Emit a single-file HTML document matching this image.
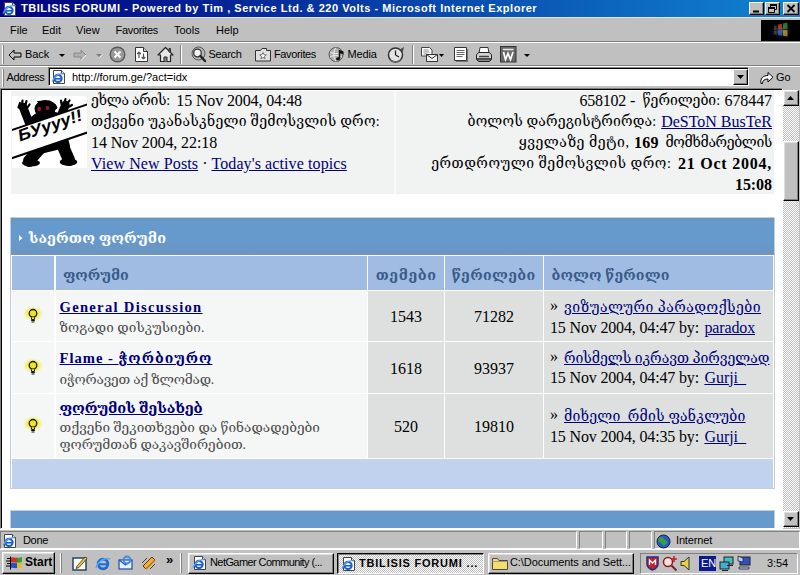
<!DOCTYPE html>
<html><head><meta charset="utf-8"><title>TBILISIS FORUMI</title>
<style>
*{box-sizing:border-box;margin:0;padding:0}
html,body{width:800px;height:575px;overflow:hidden;background:#c0c0c0}
body{position:relative;font-family:"Liberation Sans","DejaVu Sans",sans-serif;font-size:11px;color:#000}
.abs,.abs>*{position:absolute}
svg{display:block;overflow:visible}
#title{left:0;top:0;width:800px;height:17px;background:linear-gradient(90deg,#000080 0%,#1084d0 100%)}
#title .t{left:20px;top:2px;color:#fff;font-weight:bold;font-size:11px;white-space:nowrap}
.wb{top:2px;width:15px;height:13px;background:#c0c0c0;border:1px solid;border-color:#fff #000 #000 #fff;box-shadow:inset -1px -1px 0 #808080}
#menu{left:0;top:17px;width:800px;height:24px;background:#c0c0c0;border-top:1px solid #e4e4ec}
#menu span{top:5.5px;font-size:11px;white-space:nowrap}
#tb{left:0;top:41px;width:800px;height:24px;background:#c0c0c0;border-top:1px solid #808080;box-shadow:inset 0 1px 0 #fff}
#tb span.l{top:6px;font-size:11px;white-space:nowrap}
.grip{left:2px;width:2px;border-left:1px solid #fff;border-right:1px solid #808080}
.sep{width:2px;border-left:1px solid #808080;border-right:1px solid #fff}
#addr{left:0;top:65px;width:800px;height:23px;background:#c0c0c0;border-top:1px solid #808080;box-shadow:inset 0 1px 0 #fff}
#page{left:0;top:88px;width:783px;height:441px;background:#fff;border:1px solid;border-color:#808080 #fff #fff #808080;overflow:hidden}
#pin{left:0;top:0;width:781px;height:439px;border-left:1px solid #000;border-top:1px solid #000;overflow:hidden}
.pg{font-family:"Liberation Serif","DejaVu Serif",serif;font-size:16px;color:#000}
.k{font-family:"Liberation Serif","DejaVu Serif",serif;font-size:14px}
a{color:#00007a;text-decoration:underline}
.ln{position:absolute;white-space:nowrap;line-height:21px;height:21px;letter-spacing:.05px}
.r{right:28px;text-align:right}
.p{position:absolute;white-space:nowrap;line-height:21px;height:21px}
.hd{color:#fff;font-weight:bold;font-size:14.4px !important;line-height:20px}
.ch{top:256px;height:34px;background:#a0bce2}
.ct{color:#3a5a8a;font-weight:bold;font-size:14.2px !important;line-height:22px}
.c1{background:#f5f6f6}
.c2{background:#dee0e0;text-align:center;white-space:nowrap;padding-top:1px}
.ft{font-weight:bold;font-size:14.6px}
.ds{color:#4c4c4c;font-size:13.6px !important;line-height:18px}
.btn{background:#c0c0c0;border:1px solid;border-color:#fff #000 #000 #fff;box-shadow:inset -1px -1px 0 #808080,inset 1px 1px 0 #dfdfdf}
.btnp{background:conic-gradient(#fff 25%,#c0c0c0 0 50%,#fff 0 75%,#c0c0c0 0) 0 0/2px 2px;border:1px solid;border-color:#000 #fff #fff #000;box-shadow:inset 1px 1px 0 #808080}
.sunk{border:1px solid;border-color:#808080 #fff #fff #808080}
#t_title{letter-spacing:0.53px}
#i_l1a{letter-spacing:-0.28px}
#i_l1b{letter-spacing:-0.13px}
#i_l2{letter-spacing:0.26px}
#i_l3{letter-spacing:-0.11px}
#i_l4{letter-spacing:0.10px}
#i_r1a{letter-spacing:-0.23px}
#i_r1b{letter-spacing:-0.04px}
#i_r1c{letter-spacing:-0.08px}
#i_r2a{letter-spacing:0.15px}
#i_r2b{letter-spacing:-0.02px}
#i_r3a{letter-spacing:0.52px}
#i_r3b{letter-spacing:0.23px}
#i_r3c{letter-spacing:-0.37px}
#i_r4a{letter-spacing:0.51px}
#i_r4b{letter-spacing:0.76px}
#i_r5{letter-spacing:-0.07px}
#h_cat{letter-spacing:0.14px}
#h_c1{letter-spacing:0.00px}
#h_c2{letter-spacing:0.64px}
#h_c3{letter-spacing:0.35px}
#h_c4{letter-spacing:0.14px}
#r1_t{letter-spacing:1.30px}
#r1_d{letter-spacing:0.07px}
#r2_t{letter-spacing:1.00px}
#r2_d{letter-spacing:-0.20px}
#r3_t{letter-spacing:-0.17px}
#r3_d1{letter-spacing:0.02px}
#r3_d2{letter-spacing:-0.04px}
#r1_l{letter-spacing:0.46px}
#r1_b{letter-spacing:-0.16px}
#r1_u{letter-spacing:-0.13px}
#r2_l{letter-spacing:-0.02px}
#r2_b{letter-spacing:-0.16px}
#r2_u{letter-spacing:-0.03px}
#a_lbl{letter-spacing:-0.34px}
#m_fav{letter-spacing:-0.31px}
#s_done{letter-spacing:-0.32px}
#s_inet{letter-spacing:-0.16px}
#tb1{letter-spacing:-0.04px}
#tb2{letter-spacing:-0.31px}
#tb3{letter-spacing:-0.36px}
#tb4{letter-spacing:-0.15px}
#tk1{letter-spacing:-0.58px}
#tk2{letter-spacing:0.80px}
#tk3{letter-spacing:-0.08px}
#clock{letter-spacing:-0.11px}
#r3_l{letter-spacing:0.22px}
#r3_b{letter-spacing:-0.16px}
#r3_u{letter-spacing:-0.03px}

</style></head><body>
<!-- TITLE BAR -->
<div id="title" class="abs"><span class="t" id="t_title" style="left:21px">TBILISIS FORUMI - Powered by Tim , Service Ltd. &amp; 220 Volts - Microsoft Internet Explorer</span>
<div class="wb" style="left:749px"></div><div class="wb" style="left:765px"></div><div class="wb" style="left:783px;width:16px"></div><svg style="left:2px;top:1px" width="16" height="16" viewBox="0 0 16 16"><path d="M2.5 1.5h8l3 3v10h-11z" fill="#fff" stroke="#444" stroke-width="1"/><path d="M10.5 1.5v3h3" fill="#ddd" stroke="#444" stroke-width="1"/><circle cx="7" cy="9.5" r="3.6" fill="none" stroke="#1c5fd0" stroke-width="2.2"/><path d="M3.5 9.8h7" stroke="#1c5fd0" stroke-width="1.6"/><path d="M1 12.5C3 7 9 3.5 13 5" fill="none" stroke="#5aa0f0" stroke-width="1.2"/></svg>
<svg style="left:749px;top:2px" width="15" height="13"><path d="M4 9.5h6" stroke="#000" stroke-width="2"/></svg>
<svg style="left:765px;top:2px" width="15" height="13"><path d="M5.5 2.5h6v5h-6zM5.5 3.5h6" fill="none" stroke="#000" stroke-width="1"/><path d="M5 2h7v2h-7z" fill="#000"/><path d="M3.500 5.500h6v5h-6z" fill="#c0c0c0" stroke="#000" stroke-width="1"/><path d="M3 5h7v2h-7z" fill="#000"/></svg>
<svg style="left:783px;top:2px" width="16" height="13"><path d="M4.500 3L11.500 10M11.500 3L4.500 10" stroke="#000" stroke-width="1.8"/></svg>
</div>
<!-- MENU -->
<div id="menu" class="abs"><span style="left:10px">File</span><span style="left:42px">Edit</span><span style="left:76px">View</span><span style="left:115.5px" id="m_fav">Favorites</span><span style="left:174px">Tools</span><span style="left:216px">Help</span>
<svg style="left:761px;top:2px" width="39" height="21" viewBox="0 0 39 21"><rect width="39" height="21" fill="#000"/><defs><radialGradient id="lg"><stop offset="0" stop-color="#4a6a9a" stop-opacity=".9"/><stop offset="1" stop-color="#000" stop-opacity="0"/></radialGradient></defs><ellipse cx="20" cy="11" rx="13" ry="9" fill="url(#lg)"/><g opacity=".7"><path d="M17 4.500l4-.8v5.500l-4 .3z" fill="#d04a2a"/><path d="M22 3.500l4.500-.9v6.200l-4.500 .3z" fill="#4a9a3a"/><path d="M17 10.500l4-.2v5.500l-4-.8z" fill="#3a6ac8"/><path d="M22 10.200l4.500-.2v6.500l-4.500-.8z" fill="#d8b020"/><path d="M13 6l2.500-.5v4.200l-2.500 .2zM13 10.800l2.500-.1v4l-2.500-.5z" fill="#8a5a4a" opacity=".7"/></g></svg></div>
<!-- TOOLBAR -->
<div id="tb" class="abs"><div class="grip" style="top:3px;height:19px"></div>
<span class="l" id="tb1" style="left:25px">Back</span><span class="l" id="tb2" style="left:208.5px">Search</span><span class="l" id="tb3" style="left:274px">Favorites</span><span class="l" id="tb4" style="left:347.5px">Media</span>

<svg style="left:8px;top:7px" width="14" height="12" viewBox="0 0 14 12"><path d="M6 1L1 6L6 11V8h7V4H6z" fill="#c0c0c0" stroke="#000" stroke-width="1" stroke-linejoin="round"/></svg>
<svg style="left:59px;top:12px" width="6" height="3"><path d="M0 0h6l-3 3z" fill="#000"/></svg>
<svg style="left:73px;top:7px" width="14" height="12" viewBox="0 0 14 12"><path d="M8 1L13 6L8 11V8H1V4h7z" fill="#b0b0b0" stroke="#888" stroke-width="1" stroke-linejoin="round"/><path d="M8 11.5l5-5.500" stroke="#fff" stroke-width="1"/></svg>
<svg style="left:96px;top:12px" width="6" height="4"><path d="M0 0h6l-3 3z" fill="#808080"/><path d="M3.500 3.500l3-3" stroke="#fff" stroke-width=".8"/></svg>
<svg style="left:109px;top:4px" width="17" height="17" viewBox="0 0 17 17"><circle cx="8.500" cy="8.500" r="7.300" fill="#9a9a9a" stroke="#5a5a5a" stroke-width="1.400"/><path d="M5.500 5.500l6 6M11.500 5.500l-6 6" stroke="#fff" stroke-width="2"/></svg>
<svg style="left:134px;top:4px" width="15" height="17" viewBox="0 0 15 17"><path d="M1.500 1.500h8l4 4v10h-12z" fill="#fff" stroke="#333" stroke-width="1"/><path d="M9.500 1.500v4h4" fill="#ccc" stroke="#333" stroke-width="1"/><path d="M5 6v6M5 6l-1.800 2M5 6l1.800 2M9.500 13V7.500M9.500 13l-1.800-2M9.500 13l1.800-2" stroke="#555" stroke-width="1.200" fill="none"/></svg>
<svg style="left:157px;top:4px" width="17" height="17" viewBox="0 0 17 17"><path d="M8.500 1.500L1 9h2.500v6.500h10V9H16z" fill="#e8e8e8" stroke="#222" stroke-width="1.200" stroke-linejoin="round"/><path d="M7 15.500v-4.500h3v4.500" fill="#888" stroke="#222" stroke-width="1"/><path d="M12 2.500v3l1.500 1.500V2.500z" fill="#666" stroke="#222" stroke-width=".8"/></svg>
<svg style="left:190px;top:4px" width="17" height="17" viewBox="0 0 17 17"><circle cx="8.500" cy="7.500" r="6.500" fill="#b8b8b8" stroke="#555" stroke-width="1"/><circle cx="7.500" cy="7" r="3.800" fill="#f4f4f4" stroke="#333" stroke-width="1.300"/><path d="M10.500 10l4.500 5" stroke="#222" stroke-width="2.400" stroke-linecap="round"/></svg>
<svg style="left:255px;top:5px" width="16" height="15" viewBox="0 0 16 15"><path d="M.5 3.500h5l1.500-2h4.500v2h4v10.500H.5z" fill="#e0e0e0" stroke="#333" stroke-width="1"/><path d="M8 5.500l1 2.200 2.300.2-1.800 1.500.6 2.300L8 10.500l-2.100 1.200.6-2.300-1.800-1.500 2.300-.2z" fill="#fff" stroke="#555" stroke-width=".8"/></svg>
<svg style="left:328px;top:4px" width="18" height="17" viewBox="0 0 18 17"><circle cx="8" cy="8.500" r="7" fill="#b0b0b0" stroke="#555" stroke-width="1"/><path d="M2 6c3 2 8 2 12 0M2 11c3-2 8-2 12 0M8 1.500c-3 4-3 10 0 14" fill="none" stroke="#eee" stroke-width="1"/><path d="M11.500 4v8.500" stroke="#111" stroke-width="1.500"/><path d="M11.500 4l4 1.500v3l-4-1.500z" fill="#111"/><ellipse cx="10" cy="12.800" rx="2" ry="1.500" fill="#111"/></svg>
<svg style="left:387px;top:4px" width="18" height="17" viewBox="0 0 18 17"><circle cx="8.500" cy="9" r="7" fill="#e4e4e4" stroke="#333" stroke-width="1.500"/><path d="M8.500 9V4.500M8.500 9l3.500 2" stroke="#222" stroke-width="1.300"/><path d="M12 4l5-3-1.500 5.500z" fill="#444"/><path d="M3 13c2 2.500 8 3 11 0l-1 3H4z" fill="#666"/></svg>
<svg style="left:420px;top:4px" width="24" height="17" viewBox="0 0 24 17"><path d="M1.500 1.500h8l2.500 2.500v6h-10.500z" fill="#fff" stroke="#444" stroke-width="1"/><path d="M3.500 4h5M3.500 6h6M3.500 8h4" stroke="#888" stroke-width="1"/><path d="M6.500 8.500h11v7h-11z" fill="#f0f0f0" stroke="#333" stroke-width="1"/><path d="M6.500 8.500l5.500 4 5.500-4" fill="none" stroke="#333" stroke-width="1"/><path d="M19 8h5l-2.500 3z" fill="#000"/></svg>
<svg style="left:453px;top:4px" width="16" height="17" viewBox="0 0 16 17"><path d="M1.500 1.500h12v13h-12z" fill="#fff" stroke="#333" stroke-width="1"/><path d="M3.500 4.500h8M3.500 6.500h8M3.500 8.500h8M3.500 10.500h6" stroke="#666" stroke-width="1"/><path d="M14.500 3v12.500H3" fill="none" stroke="#777" stroke-width="1.200"/></svg>
<svg style="left:475px;top:4px" width="18" height="17" viewBox="0 0 18 17"><path d="M5 1.500h8l1 6H4z" fill="#fff" stroke="#333" stroke-width="1"/><path d="M1.500 8.500l2.500-2h10l2.500 2v4.500h-15z" fill="#d4d4d4" stroke="#222" stroke-width="1"/><path d="M1.500 13h15l-2 2.500h-11z" fill="#888" stroke="#222" stroke-width="1"/><path d="M4 10.500h10" stroke="#444" stroke-width="1.500"/></svg>
<svg style="left:500px;top:4px" width="17" height="17" viewBox="0 0 17 17"><rect x=".5" y=".5" width="15.500" height="15.500" fill="#6a6a6a" stroke="#333" stroke-width="1"/><path d="M3 3.500h10.500" stroke="#e8e8e8" stroke-width="1.500"/><path d="M3.500 6l2 7.500 2.500-6 2.500 6 2.500-7.500" fill="none" stroke="#fff" stroke-width="1.700"/></svg>
<svg style="left:524px;top:12px" width="6" height="3"><path d="M0 0h6l-3 3z" fill="#000"/></svg>
<div class="sep" style="left:180px;top:3px;height:19px"></div><div class="sep" style="left:412px;top:3px;height:19px"></div></div>
<!-- ADDRESS -->
<div id="addr" class="abs"><div class="grip" style="top:3px;height:18px"></div><span style="left:6.5px;top:5px;font-size:11px" id="a_lbl">Address</span>
<div style="left:48px;top:1px;width:701px;height:19px;background:#fff;border:1px solid;border-color:#808080 #fff #fff #808080;box-shadow:inset 1px 1px 0 #000"><span class="abs" style="left:23px;top:3px;font-size:11px;white-space:nowrap">http://forum.ge/?act=idx</span></div>
<svg style="left:51px;top:3px" width="16" height="16" viewBox="0 0 16 16"><path d="M2.500 1.500h8l3 3v10h-11z" fill="#fff" stroke="#444" stroke-width="1"/><path d="M10.500 1.500v3h3" fill="#ddd" stroke="#444" stroke-width="1"/><circle cx="7" cy="9.500" r="3.600" fill="none" stroke="#1c5fd0" stroke-width="2.200"/><path d="M3.500 9.800h7" stroke="#1c5fd0" stroke-width="1.600"/><path d="M1 12.500C3 7 9 3.500 13 5" fill="none" stroke="#5aa0f0" stroke-width="1.200"/></svg>
<div style="left:733px;top:3px;width:15px;height:16px;background:#c0c0c0;border:1px solid;border-color:#fff #000 #000 #fff;box-shadow:inset -1px -1px 0 #808080"></div>
<svg style="left:737px;top:9px" width="7" height="4"><path d="M0 0h7l-3.500 4z" fill="#000"/></svg>
<svg style="left:759px;top:4px" width="15" height="15" viewBox="0 0 15 15"><path d="M2 13.500c-1-5 2-8 7-8V2.500l5 4.800-5 4.700V9C5.500 9 3.500 10.500 3.500 13.500z" fill="#fff" stroke="#000" stroke-width="1" stroke-linejoin="round"/></svg>
<span style="left:776px;top:5px;font-size:11px">Go</span></div>
<!-- PAGE -->
<div id="page" class="abs"><div id="pin" class="pg abs"><div id="pc" class="abs" style="left:-2px;top:-90px;width:800px;height:575px">
<!-- info box -->
<div style="left:11px;top:91px;width:763px;height:103px;background:#f1f2f2"></div><div style="left:394px;top:91px;width:2px;height:103px;background:#fafafa"></div>
<svg id="bear" style="left:12px;top:96px;background:#fff;overflow:hidden" width="75" height="72" viewBox="0 0 75 72">
<g fill="#000" stroke="#000" stroke-linecap="round" stroke-linejoin="round">
<g transform="translate(0 2)"><path d="M11 9L19.5 31" stroke-width="8.5"/>
<path d="M6.5 9.5L8 5M10 7L10.5 2.5M13.5 7L14.5 3M15.5 9.5L17.5 6.5" stroke-width="2.2"/>
<path d="M53.5 7L45.5 26" stroke-width="8.5"/>
<path d="M49.5 6L49 2.5M52.5 4.5L53.5 1M55.5 5.5L57.5 2.5M57.5 8.5L60 7" stroke-width="2.2"/></g>
<ellipse cx="33" cy="13" rx="10.5" ry="9" stroke="none"/>
<path d="M26 5.5L38 5L43.5 8.5L45 12L41 15L38 18z" stroke-width="1"/>
<path d="M17 24L49 19L57 50L24 58z" stroke-width="2"/><path d="M17 23L25 17L41 16L49 18L50 30L19 35z" stroke-width="1"/>
<path d="M30 50L17 65" stroke-width="12"/>
<path d="M50 48L57 64" stroke-width="12"/>
<ellipse cx="19" cy="67" rx="9" ry="3.4" stroke="none"/>
<ellipse cx="56.5" cy="66" rx="8.8" ry="3.8" stroke="none"/>
</g>
<circle cx="27.2" cy="13" r="1.9" fill="#b01038"/><circle cx="35.5" cy="11.9" r="1.9" fill="#b01038"/>
<path d="M-1 34.4L76 8.2V36.3L-1 62.5z" fill="#fff" stroke="#000" stroke-width="2"/>
<text transform="translate(8 45.5) rotate(-18.8)" font-family="'Liberation Sans','DejaVu Sans',sans-serif" font-size="16.5" font-weight="bold" font-style="italic" textLength="67" lengthAdjust="spacingAndGlyphs" fill="#000">БУууу!!</text>
</svg>
<span class="p k" id="i_l1a" style="left:91px;top:90px">ეხლა არის:</span><span class="p" id="i_l1b" style="left:176.3px;top:90px">15 Nov 2004, 04:48</span>
<span class="p k" id="i_l2" style="left:91px;top:111px">თქვენი უკანასკნელი შემოსვლის დრო:</span>
<span class="p" id="i_l3" style="left:91px;top:132px">14 Nov 2004, 22:18</span>
<span class="p" id="i_l4" style="left:91px;top:153px"><a>View New Posts</a> · <a>Today's active topics</a></span>
<span class="p" id="i_r1a" style="left:579.5px;top:90px">658102 -</span><span class="p k" id="i_r1b" style="left:642.5px;top:90px">წერილები:</span><span class="p" id="i_r1c" style="left:724.5px;top:90px">678447</span>
<span class="p k" id="i_r2a" style="left:467.5px;top:111px">ბოლოს დარეგისტრირდა:</span><a class="p" id="i_r2b" style="left:661.2px;top:111px">DeSToN BusTeR</a>
<span class="p k" id="i_r3a" style="left:518.7px;top:132px">ყველაზე მეტი,</span><b class="p" id="i_r3b" style="left:634px;top:132px">169</b><span class="p k" id="i_r3c" style="left:665.5px;top:132px">მომხმარებლის</span>
<span class="p k" id="i_r4a" style="left:431.2px;top:153px">ერთდროული შემოსვლის დრო:</span><b class="p" id="i_r4b" style="left:678px;top:153px">21 Oct 2004,</b>
<b class="p" id="i_r5" style="left:735px;top:174px">15:08</b>
<!-- CATEGORY TABLE -->
<div style="left:10px;top:217px;width:765px;height:272px;background:#fff;border:1px solid #c3cddc"></div>
<div style="left:11px;top:218px;width:763px;height:37px;background:linear-gradient(#6d93c0 0,#6699cc 3px,#6699cc 24px,#6a97c6 27px,#6b96c4 34px,#7095be 37px)"></div>
<span class="p k hd" id="h_cat" style="left:28.7px;top:228px">საერთო ფორუმი</span>
<svg style="left:19px;top:234.5px" width="4" height="6"><path d="M0 0L3.5 3L0 6z" fill="#fff"/></svg>
<!-- column header -->
<div class="ch" style="left:12px;width:42px"></div>
<div class="ch" style="left:56px;width:311px"></div>
<div class="ch" style="left:368px;width:76px"></div>
<div class="ch" style="left:445px;width:98px"></div>
<div class="ch" style="left:544px;width:229px"></div>
<span class="p k ct" id="h_c1" style="left:63px;top:264px">ფორუმი</span>
<span class="p k ct" id="h_c2" style="left:375.7px;top:264px">თემები</span>
<span class="p k ct" id="h_c3" style="left:451.8px;top:264px">წერილები</span>
<span class="p k ct" id="h_c4" style="left:551.4px;top:264px">ბოლო წერილი</span>
<!-- row 1 -->
<div class="c1" style="left:12px;top:291px;width:42px;height:50px"></div>
<div class="c1" style="left:56px;top:291px;width:311px;height:50px"></div>
<div class="c2" style="left:368px;top:291px;width:76px;height:50px;line-height:50px">1543</div>
<div class="c2" style="left:445px;top:291px;width:98px;height:50px;line-height:50px">71282</div>
<div class="c2" style="left:544px;top:291px;width:229px;height:50px"></div>
<a class="p ft" id="r1_t" style="left:59.5px;top:297.3px">General Discussion</a>
<span class="p k ds" id="r1_d" style="left:59.5px;top:319px">ზოგადი დისკუსიები.</span>
<span class="p" style="left:550px;top:295px">»</span><a class="p k" id="r1_l" style="left:564px;top:297px">ვიზუალური პარადოქსები</a>
<span class="p" id="r1_b" style="left:550px;top:316.5px">15 Nov 2004, 04:47 by:</span><a class="p" id="r1_u" style="left:704.4px;top:316.5px">paradox</a>
<!-- row 2 -->
<div class="c1" style="left:12px;top:342px;width:42px;height:51px"></div>
<div class="c1" style="left:56px;top:342px;width:311px;height:51px"></div>
<div class="c2" style="left:368px;top:342px;width:76px;height:51px;line-height:51px">1618</div>
<div class="c2" style="left:445px;top:342px;width:98px;height:51px;line-height:51px">93937</div>
<div class="c2" style="left:544px;top:342px;width:229px;height:51px"></div>
<a class="p ft" id="r2_t" style="left:59.5px;top:348.3px">Flame - <span class="k">ჭორბიურო</span></a>
<span class="p k ds" id="r2_d" style="left:59.5px;top:370.5px">იჭორავეთ აქ ზლომად.</span>
<span class="p" style="left:550px;top:346px">»</span><a class="p k" id="r2_l" style="left:564px;top:348.3px">რისმელს იკრავთ პირველად</a>
<span class="p" id="r2_b" style="left:550px;top:366.5px">15 Nov 2004, 04:47 by:</span><a class="p" id="r2_u" style="left:704.4px;top:366.5px">Gurji_</a>
<!-- row 3 -->
<div class="c1" style="left:12px;top:394px;width:42px;height:64px"></div>
<div class="c1" style="left:56px;top:394px;width:311px;height:64px"></div>
<div class="c2" style="left:368px;top:394px;width:76px;height:64px;line-height:64px">520</div>
<div class="c2" style="left:445px;top:394px;width:98px;height:64px;line-height:64px">19810</div>
<div class="c2" style="left:544px;top:394px;width:229px;height:64px"></div>
<a class="p ft k" id="r3_t" style="left:59.5px;top:397.5px">ფორუმის შესახებ</a>
<span class="p k ds" id="r3_d1" style="left:59.5px;top:419px">თქვენი შეკითხვები და წინადადებები</span>
<span class="p k ds" id="r3_d2" style="left:59.5px;top:436px">ფორუმთან დაკავშირებით.</span>
<span class="p" style="left:550px;top:404px">»</span><a class="p k" id="r3_l" style="left:564px;top:405.8px">მიხელი_რმის ფანკლუბი</a>
<span class="p" id="r3_b" style="left:550px;top:425.5px">15 Nov 2004, 04:35 by:</span><a class="p" id="r3_u" style="left:704.4px;top:425.5px">Gurji_</a>
<svg width="0" height="0" style="left:0;top:0"><defs><radialGradient id="bg"><stop offset="0" stop-color="#f4f040"/><stop offset=".6" stop-color="#f2f050" stop-opacity=".9"/><stop offset="1" stop-color="#f6f6a0" stop-opacity="0"/></radialGradient></defs></svg><svg style="left:22px;top:304px" width="22" height="22" viewBox="0 0 22 22"><ellipse cx="11" cy="9.500" rx="10.500" ry="7.500" fill="url(#bg)"/><circle cx="11" cy="9.300" r="3.800" fill="#ece428" stroke="#1a1a00" stroke-width="1.300"/><path d="M9.300 13.200L9.600 15.500h2.800l.3-2.300" fill="#ece428" stroke="#1a1a00" stroke-width="1"/><path d="M9.200 16.300h3.600M9.500 18h3" stroke="#111" stroke-width="1.200"/></svg><svg style="left:22px;top:355.5px" width="22" height="22" viewBox="0 0 22 22"><ellipse cx="11" cy="9.500" rx="10.500" ry="7.500" fill="url(#bg)"/><circle cx="11" cy="9.300" r="3.800" fill="#ece428" stroke="#1a1a00" stroke-width="1.300"/><path d="M9.300 13.200L9.600 15.500h2.800l.3-2.300" fill="#ece428" stroke="#1a1a00" stroke-width="1"/><path d="M9.200 16.300h3.600M9.500 18h3" stroke="#111" stroke-width="1.200"/></svg><svg style="left:22px;top:414px" width="22" height="22" viewBox="0 0 22 22"><ellipse cx="11" cy="9.500" rx="10.500" ry="7.500" fill="url(#bg)"/><circle cx="11" cy="9.300" r="3.800" fill="#ece428" stroke="#1a1a00" stroke-width="1.300"/><path d="M9.300 13.200L9.600 15.500h2.800l.3-2.300" fill="#ece428" stroke="#1a1a00" stroke-width="1"/><path d="M9.200 16.300h3.600M9.500 18h3" stroke="#111" stroke-width="1.200"/></svg>
<!-- footer -->
<div style="left:12px;top:459px;width:761px;height:29px;background:#c1d2ee"></div>
<!-- next category -->
<div style="left:10px;top:510px;width:765px;height:60px;background:#fff;border:1px solid #c3cddc"></div>
<div style="left:11px;top:511px;width:763px;height:37px;background:#6699cc"></div>
</div></div></div>

<!-- SCROLLBAR -->
<div id="sb" class="abs" style="left:783px;top:90px;width:16px;height:438px;background:conic-gradient(#fff 25%,#c0c0c0 0 50%,#fff 0 75%,#c0c0c0 0) 0 0/2px 2px">
<div class="btn" style="left:0;top:0;width:16px;height:16px"></div><svg style="left:4px;top:6px" width="7" height="4"><path d="M0 4h7L3.500 0z" fill="#000"/></svg>
<div class="btn" style="left:0;top:51px;width:16px;height:60px"></div>
<div class="btn" style="left:0;top:421px;width:16px;height:16px"></div><svg style="left:4px;top:427px" width="7" height="4"><path d="M0 0h7L3.500 4z" fill="#000"/></svg>
</div>
<!-- STATUS BAR -->
<div id="status" class="abs" style="left:0;top:529px;width:800px;height:20px;background:#c0c0c0;border-top:1px solid #fff">
<div class="sunk" style="left:0;top:1px;width:577px;height:18px"></div>
<div class="sunk" style="left:579px;top:1px;width:24px;height:18px"></div>
<div class="sunk" style="left:605px;top:1px;width:22px;height:18px"></div>
<div class="sunk" style="left:629px;top:1px;width:23px;height:18px"></div>
<div class="sunk" style="left:654px;top:1px;width:146px;height:18px"></div>
<svg style="left:2px;top:3px" width="16" height="16" viewBox="0 0 16 16"><path d="M2.500 1.500h8l3 3v10h-11z" fill="#fff" stroke="#444" stroke-width="1"/><path d="M10.500 1.500v3h3" fill="#ddd" stroke="#444" stroke-width="1"/><circle cx="7" cy="9.500" r="3.600" fill="none" stroke="#1c5fd0" stroke-width="2.200"/><path d="M3.500 9.800h7" stroke="#1c5fd0" stroke-width="1.600"/><path d="M1 12.500C3 7 9 3.500 13 5" fill="none" stroke="#5aa0f0" stroke-width="1.200"/></svg>
<span style="left:23px;top:4px;font-size:11px" id="s_done">Done</span>
<svg style="left:656px;top:4px" width="15" height="15" viewBox="0 0 15 15"><circle cx="7.500" cy="7.500" r="6.500" fill="#2a5ad0" stroke="#123" stroke-width="1"/><path d="M3 4c2-2 4-1 5 1s3 1 3 3-2 4-4 3-1-3-3-3-2-3-1-4z" fill="#3aa03a"/></svg>
<span style="left:676px;top:4px;font-size:11px" id="s_inet">Internet</span>
</div>
<!-- TASKBAR -->
<div id="task" class="abs" style="left:0;top:549px;width:800px;height:26px;background:#c0c0c0;border-top:1px solid #fff">
<div class="btn" style="left:2px;top:2px;width:53px;height:22px"></div>
<svg style="left:6px;top:5px" width="17" height="16" viewBox="0 0 17 16"><path d="M5 2.500c2-1 4 1 6 0v5c-2 1-4-1-6 0z" fill="#d03020"/><path d="M11 2.500c2 1 3-.5 5-.5v5c-2 0-3 1.500-5 .5z" fill="#30a030"/><path d="M5 8c2-1 4 1 6 0v5c-2 1-4-1-6 0z" fill="#2050d0"/><path d="M11 8c2 1 3-.5 5-.5v5c-2 0-3 1.500-5 .5z" fill="#e0c020"/><path d="M1 3.500h3M0 6h4M1 8.500h3M0 11h4" stroke="#000" stroke-width="1.200"/><path d="M4.500 1.500v13" stroke="#000" stroke-width="1"/></svg>
<span style="left:25px;top:5px;font-size:12px;font-weight:bold">Start</span>
<div class="grip" style="left:60px;top:3px;height:20px"></div>
<svg style="left:72px;top:5px" width="16" height="16" viewBox="0 0 16 16"><rect x="1" y="3" width="13" height="12" fill="#fff" stroke="#246" stroke-width="1.500"/><path d="M5 11l8-9 2 1.500-8 9-3 1z" fill="#e8c040" stroke="#432" stroke-width=".8"/></svg>
<svg style="left:95px;top:5px" width="16" height="16" viewBox="0 0 16 16"><circle cx="8" cy="9" r="4.800" fill="none" stroke="#1c6ad8" stroke-width="2.800"/><path d="M3.500 9.300h9" stroke="#1c6ad8" stroke-width="2"/><path d="M1 13C3 6 10 2 15 4" fill="none" stroke="#58a8f8" stroke-width="1.500"/></svg>
<svg style="left:118px;top:5px" width="16" height="16" viewBox="0 0 16 16"><rect x="1" y="5" width="13" height="9" fill="#e8f0ff" stroke="#2858b0" stroke-width="1.300"/><path d="M1 5l6.500 5 6.500-5" fill="none" stroke="#2858b0" stroke-width="1.200"/><circle cx="9" cy="5" r="3.500" fill="none" stroke="#3a8ae8" stroke-width="1.800"/></svg>
<svg style="left:141px;top:5px" width="16" height="16" viewBox="0 0 16 16"><path d="M2 11L11 2l3 3-9 9z" fill="#f0b030" stroke="#5a3a10" stroke-width="1"/><path d="M5 14L14 5" stroke="#c07010" stroke-width="1.500"/><path d="M1 8l5-5M9 14l5-5" stroke="#5a3a10" stroke-width="1"/></svg>
<span style="left:166px;top:2px;font-size:13px;font-weight:bold">»</span>
<div class="grip" style="left:180px;top:3px;height:20px"></div>
<div class="btn" style="left:188px;top:3px;width:146px;height:21px"></div><svg style="left:192px;top:5px" width="16" height="16" viewBox="0 0 16 16"><path d="M2.500 1.500h8l3 3v10h-11z" fill="#fff" stroke="#444" stroke-width="1"/><path d="M10.500 1.500v3h3" fill="#ddd" stroke="#444" stroke-width="1"/><circle cx="7" cy="9.500" r="3.600" fill="none" stroke="#1c5fd0" stroke-width="2.200"/><path d="M3.500 9.800h7" stroke="#1c5fd0" stroke-width="1.600"/><path d="M1 12.500C3 7 9 3.500 13 5" fill="none" stroke="#5aa0f0" stroke-width="1.200"/></svg>
<span style="left:210px;top:6px;font-size:11px" id="tk1">NetGamer Community (...</span>
<div class="btnp" style="left:337px;top:3px;width:147px;height:21px"></div><svg style="left:341px;top:6px" width="16" height="16" viewBox="0 0 16 16"><path d="M2.500 1.500h8l3 3v10h-11z" fill="#fff" stroke="#444" stroke-width="1"/><path d="M10.500 1.500v3h3" fill="#ddd" stroke="#444" stroke-width="1"/><circle cx="7" cy="9.500" r="3.600" fill="none" stroke="#1c5fd0" stroke-width="2.200"/><path d="M3.500 9.800h7" stroke="#1c5fd0" stroke-width="1.600"/><path d="M1 12.500C3 7 9 3.500 13 5" fill="none" stroke="#5aa0f0" stroke-width="1.200"/></svg>
<span style="left:359px;top:7px;font-size:11px;font-weight:bold" id="tk2">TBILISIS FORUMI ...</span>
<div class="btn" style="left:488px;top:3px;width:146px;height:21px"></div>
<svg style="left:492px;top:6px" width="16" height="14" viewBox="0 0 16 14"><path d="M.5 2.500h5l1.500 2h8.500v9H.5z" fill="#f0e070" stroke="#543" stroke-width="1"/><path d="M.5 5.500h15" stroke="#a98" stroke-width="1"/></svg>
<span style="left:510px;top:6px;font-size:11px" id="tk3">C:\Documents and Sett...</span>
<div class="sunk" style="left:640px;top:3px;width:158px;height:21px"></div>
<svg style="left:646px;top:6px" width="13" height="15" viewBox="0 0 13 15"><path d="M1 1h11v7c0 3-3 5-5.500 6C4 13 1 11 1 8z" fill="#c02030" stroke="#203080" stroke-width="1.500"/><path d="M3.500 9V4l3 3 3-3v5" fill="none" stroke="#fff" stroke-width="1.300"/></svg>
<svg style="left:662px;top:6px" width="16" height="15" viewBox="0 0 16 15"><circle cx="6" cy="6" r="4.500" fill="#fdd" stroke="#802020" stroke-width="1.500"/><path d="M9.500 9.500l5 5" stroke="#802020" stroke-width="2"/><path d="M9 3h6M12 0v6" stroke="#c02020" stroke-width="1.500"/></svg>
<svg style="left:680px;top:6px" width="12" height="15" viewBox="0 0 12 15"><path d="M1 5.500h3l5-4.500v13l-5-4.500h-3z" fill="#e8d040" stroke="#333" stroke-width="1"/></svg>
<div style="left:699px;top:6px;width:17px;height:15px;background:#0a1a90"></div><span style="left:701px;top:7px;font-size:11px;color:#fff">EN</span>
<svg style="left:719px;top:6px" width="16" height="15" viewBox="0 0 16 15"><rect x="5" y="1" width="9" height="7" fill="#40c0c0" stroke="#222" stroke-width="1"/><rect x="1" y="6" width="9" height="7" fill="#40b0d0" stroke="#222" stroke-width="1"/><path d="M3 14.500h6M8 9.500h6" stroke="#222" stroke-width="1"/></svg>
<svg style="left:737px;top:5px" width="14" height="15" viewBox="0 0 14 15"><rect x="3" y="2" width="10" height="8" fill="#3050c0" stroke="#222" stroke-width="1"/><path d="M1 1l5 2v4l-5-1zM2 12h10v2H2z" fill="#c0c8f0" stroke="#223" stroke-width=".8"/></svg>
<span style="left:767px;top:7px;font-size:11px" id="clock">3:54</span>
</div>
</body></html>
